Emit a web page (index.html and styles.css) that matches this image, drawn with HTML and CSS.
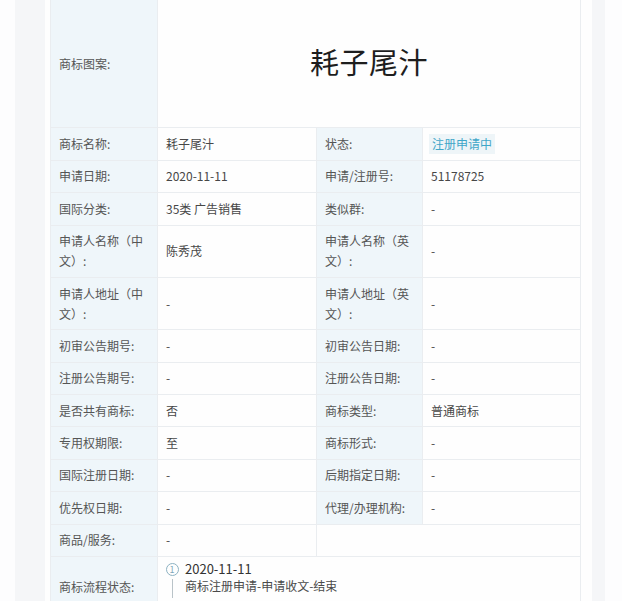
FILE: index.html
```html
<!DOCTYPE html>
<html lang="zh">
<head>
<meta charset="utf-8">
<title>商标详情</title>
<link rel="stylesheet" href="styles.css">
</head>
<body>
<div class="page">
  <div class="card">
    <table class="info">
      <colgroup>
        <col class="c1"><col class="c2"><col class="c3"><col class="c4">
      </colgroup>
      <tr class="logo-row">
        <td class="lbl">商标图案:</td>
        <td class="logo" colspan="3">耗子尾汁</td>
      </tr>
      <tr>
        <td class="lbl">商标名称:</td><td>耗子尾汁</td>
        <td class="lbl">状态:</td><td><span class="badge">注册申请中</span></td>
      </tr>
      <tr>
        <td class="lbl">申请日期:</td><td>2020-11-11</td>
        <td class="lbl">申请/注册号:</td><td>51178725</td>
      </tr>
      <tr>
        <td class="lbl">国际分类:</td><td>35类 广告销售</td>
        <td class="lbl">类似群:</td><td>-</td>
      </tr>
      <tr>
        <td class="lbl">申请人名称（中文）:</td><td>陈秀茂</td>
        <td class="lbl">申请人名称（英文）:</td><td>-</td>
      </tr>
      <tr>
        <td class="lbl">申请人地址（中文）:</td><td>-</td>
        <td class="lbl">申请人地址（英文）:</td><td>-</td>
      </tr>
      <tr>
        <td class="lbl">初审公告期号:</td><td>-</td>
        <td class="lbl">初审公告日期:</td><td>-</td>
      </tr>
      <tr>
        <td class="lbl">注册公告期号:</td><td>-</td>
        <td class="lbl">注册公告日期:</td><td>-</td>
      </tr>
      <tr>
        <td class="lbl">是否共有商标:</td><td>否</td>
        <td class="lbl">商标类型:</td><td>普通商标</td>
      </tr>
      <tr>
        <td class="lbl">专用权期限:</td><td>至</td>
        <td class="lbl">商标形式:</td><td>-</td>
      </tr>
      <tr>
        <td class="lbl">国际注册日期:</td><td>-</td>
        <td class="lbl">后期指定日期:</td><td>-</td>
      </tr>
      <tr>
        <td class="lbl">优先权日期:</td><td>-</td>
        <td class="lbl">代理/办理机构:</td><td>-</td>
      </tr>
      <tr>
        <td class="lbl">商品/服务:</td><td>-</td>
        <td colspan="2"></td>
      </tr>
      <tr class="flow-row">
        <td class="lbl">商标流程状态:</td>
        <td colspan="3" class="flow">
          <div class="step">
            <div class="marker">
              <span class="num">1</span>
              <span class="line"></span>
            </div>
            <div class="step-body">
              <div class="step-date">2020-11-11</div>
              <div class="step-text">商标注册申请-申请收文-结束</div>
            </div>
          </div>
        </td>
      </tr>
    </table>
  </div>
</div>
</body>
</html>
```

FILE: styles.css
```css
html, body {
  margin: 0;
  padding: 0;
  background: #fdfdfe;
  font-family: "Noto Sans CJK SC", "Noto Sans", sans-serif;
  color: #444;
}

.page {
  margin-left: 15px;
  width: 590px;
  min-height: 601px;
  background: #f5f6f8;
}

.card {
  margin-left: 30px;
  width: 542px;
  min-height: 601px;
  background: #fefefe;
  padding-left: 5px;
}

.info {
  width: 530px;
  border-collapse: collapse;
  table-layout: fixed;
  font-size: 12px;
  line-height: 20px;
}

.c1 { width: 107px; }
.c2 { width: 159px; }
.c3 { width: 106px; }
.c4 { width: 158px; }

.info td {
  border: 1px solid #eaedf0;
  padding: 5.7px 8px;
  vertical-align: middle;
  color: #474747;
  background: #fefefe;
}

.info tr:first-child td {
  border-top: none;
}

.info td.lbl {
  background: #eff6fa;
  color: #555;
}

.logo-row td {
  height: 116px;
}

.info td.logo {
  text-align: center;
  font-size: 29px;
  color: #1e1e1e;
  letter-spacing: 0.5px;
  padding-top: 0;
  padding-bottom: 6px;
}

.badge {
  display: inline-block;
  background: #eef5f8;
  color: #3fa6c8;
  padding: 0 3px;
  margin-left: -2px;
  line-height: 20px;
}

.flow-row td {
  height: 48px;
}

.info td.flow {
  vertical-align: top;
  padding-top: 3px;
  padding-bottom: 2px;
}

.step {
  display: flex;
  gap: 7px;
  align-items: flex-start;
}

.marker {
  display: flex;
  flex-direction: column;
  align-items: center;
  width: 12px;
  padding-top: 3px;
}

.num {
  display: block;
  width: 11px;
  height: 11px;
  border: 1px solid #8db2c2;
  border-radius: 50%;
  font-size: 9px;
  line-height: 11px;
  text-align: center;
  color: #7fa7b9;
}

.line {
  display: block;
  width: 1px;
  height: 19px;
  margin-top: 3px;
  background: #b9c3c8;
}

.step-body {
  display: flex;
  flex-direction: column;
}

.step-date {
  font-size: 13px;
  line-height: 17px;
  color: #333;
}

.step-text {
  font-size: 12px;
  line-height: 17px;
  color: #4a4a4a;
}
```
